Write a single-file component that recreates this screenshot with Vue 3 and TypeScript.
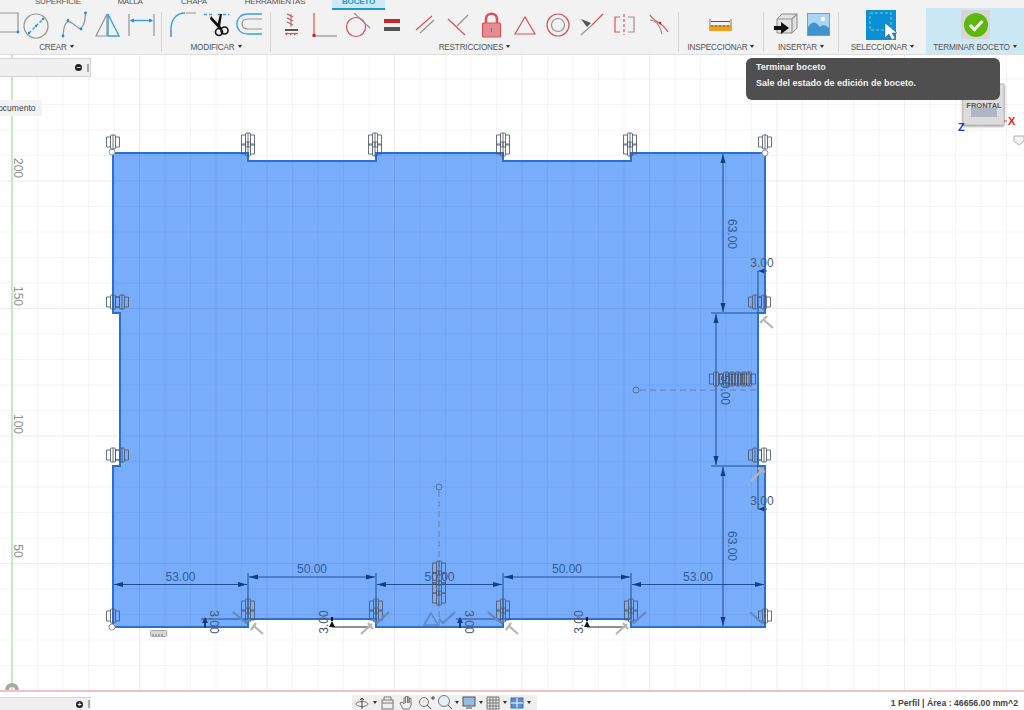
<script setup lang="ts">
// rejilla del lienzo: paso 25.5 px, linea mayor cada 5
const STEP = 25.5
const vLines = Array.from({ length: 40 }, (_, i) => ({ p: 12 + i * STEP, major: i % 5 === 0 }))
const hLines = Array.from({ length: 26 }, (_, i) => ({ p: 691 - i * STEP, major: i % 5 === 0 }))

const axisLabels = [
  { t: '200', y: 168 },
  { t: '150', y: 296 },
  { t: '100', y: 424 },
  { t: '50', y: 551 },
]

const outline =
  'M113 153 H248 V161 H376 V153 H503 V161 H631 V153 H765 V313 H758 V466 H765 V627 H631 V619 H503 V627 H376 V619 H248 V627 H113 V466 H120 V313 H113 Z'

// cotas horizontales y verticales
const hDims = [
  { x1: 113, x2: 248, y: 584.5, t: '53.00' },
  { x1: 248, x2: 376, y: 577, t: '50.00' },
  { x1: 376, x2: 503, y: 584.5, t: '50.00' },
  { x1: 503, x2: 631, y: 577, t: '50.00' },
  { x1: 631, x2: 765, y: 584.5, t: '53.00' },
]
const vDims = [
  { x: 723, y1: 153, y2: 313, t: '63.00', ty: 234 },
  { x: 716, y1: 313, y2: 466, t: '50.00', ty: 390 },
  { x: 723, y1: 466, y2: 627, t: '63.00', ty: 546 },
]

// restricciones sobre el contorno
const glyphs = [
  [113, 142], [248, 140], [248, 149], [375, 140], [375, 149], [503, 140], [503, 149],
  [630, 140], [630, 149], [765, 142],
  [113, 616], [765, 616],
  [248, 606], [248, 615], [376, 606], [376, 615], [503, 606], [503, 615], [631, 606], [631, 615],
  [439, 568], [439, 578], [439, 588], [439, 598],
  [113, 302], [122, 302], [113, 455], [122, 455],
  [755, 302], [764, 302], [755, 455], [764, 455],
  [716, 379], [726, 379], [732, 379], [738, 379], [744, 379], [749, 379],
]
</script>

<template>
  <div class="app">
    <header class="toolbar">
      <nav class="tabs">
        <span class="tab t-sup">SUPERFICIE</span>
        <span class="tab t-mal">MALLA</span>
        <span class="tab t-cha">CHAPA</span>
        <span class="tab t-her">HERRAMIENTAS</span>
        <span class="tab t-boc">BOCETO</span>
      </nav>
      <div class="ribbon">
        <section class="group g-crear">
          <div class="icons">
            <svg width="34" height="30" viewBox="-14 10 34 30">
              <path d="M-8 13H18V32H-8" class="g-line" />
              <circle cx="18" cy="32" r="1.4" class="blue-dot" />
            </svg>
            <svg width="34" height="30" viewBox="20 10 34 30">
              <circle cx="36" cy="26" r="12" class="g-line" />
              <path d="M29 33L43 19" class="b-line dash" />
              <circle cx="29" cy="33" r="1.2" class="blue-dot" />
              <circle cx="36" cy="26" r="1.2" class="blue-dot" />
              <circle cx="43" cy="19" r="1.2" class="blue-dot" />
            </svg>
            <svg width="34" height="30" viewBox="54 10 34 30">
              <path d="M63 36C64 22 67 20 72 23S79 31 82 27S85 20 85.500 13" class="g-line" />
              <circle cx="63" cy="36" r="1.4" class="blue-dot" />
              <circle cx="68" cy="20.500" r="1.400" class="blue-dot" />
              <circle cx="81" cy="29" r="1.400" class="blue-dot" />
              <circle cx="85.500" cy="13" r="1.400" class="blue-dot" />
            </svg>
            <svg width="34" height="30" viewBox="88 10 34 30">
              <path d="M96 36L107 14V36Z" class="g-line" />
              <path d="M108 14L119 36H108Z" class="b-line" />
            </svg>
            <svg width="34" height="30" viewBox="122 10 34 30">
              <path d="M129 14V36M154 14V36" class="g-line" />
              <path d="M131 20.500H152" class="b-line" />
              <path d="M130 20.500L134 18.500V22.500ZM153 20.500L149 18.500V22.500Z" class="blue-fill" />
            </svg>
          </div>
          <span class="label">CREAR</span>
        </section>
        <i class="sep"></i>
        <section class="group g-mod">
          <div class="icons">
            <svg width="34" height="30" viewBox="166 10 34 30">
              <path d="M171 37V29C171 20 176 13 185 13" class="b-line" />
              <path d="M171 37V30M186 13H196" class="g-line" />
            </svg>
            <svg width="34" height="30" viewBox="200 10 34 30">
              <path d="M204 14.500H214M218 14.500H229" class="b-line dash" />
              <path d="M211 16L222 28L220 30L210 19ZM220 14L222 14L220 27L217 26Z" class="black-fill" />
              <circle cx="219" cy="32" r="3.500" class="scis" />
              <circle cx="224.500" cy="30.500" r="3.500" class="scis" />
            </svg>
            <svg width="34" height="30" viewBox="234 10 34 30">
              <path d="M262 14H248C233 14 233 34 248 34H262" class="b-line" />
              <path d="M262 19H248C240 19 240 29 248 29H262" class="g-line" />
            </svg>
          </div>
          <span class="label">MODIFICAR</span>
        </section>
        <i class="sep"></i>
        <section class="group g-res">
          <div class="icons">
            <svg width="33" height="30" viewBox="275 10 33 30">
              <path d="M291 14V27" class="g-line" />
              <path d="M287 14L293 17M287 18L293 21M287 22L293 25" class="r-line" />
              <path d="M285 30H298" class="dk-line thick" />
              <path d="M286 35L288 33M290 35L292 33M294 35L296 33M285 33.500H298" class="r-line" />
            </svg>
            <svg width="33" height="30" viewBox="308 10 33 30">
              <path d="M314 13V35" class="r-line" />
              <path d="M315 36H337" class="g-line" />
              <rect x="312.500" y="34" width="3" height="3" class="red-fill" />
            </svg>
            <svg width="33" height="30" viewBox="341 10 33 30">
              <circle cx="356" cy="27" r="9.500" class="r-line" />
              <path d="M354 13L370 28" class="g-line" />
            </svg>
            <svg width="34" height="30" viewBox="374 10 34 30">
              <rect x="384" y="19" width="16" height="4" class="red-fill" />
              <rect x="384" y="27" width="16" height="4" class="dk-fill" />
            </svg>
            <svg width="33" height="30" viewBox="408 10 33 30">
              <path d="M416 30L432 16" class="r-line" />
              <path d="M420 33L434 20" class="g-line" />
            </svg>
            <svg width="33" height="30" viewBox="441 10 33 30">
              <path d="M448 19L465 35" class="r-line" />
              <path d="M457 26L468 15" class="g-line" />
            </svg>
            <svg width="34" height="30" viewBox="474 10 34 30">
              <path d="M486 24V19C486 12 497 12 497 19V24" class="lock-arc" />
              <rect x="482.500" y="23" width="18" height="14" rx="1" class="lock-body" />
              <path d="M491.500 28V32" class="r-line" />
            </svg>
            <svg width="33" height="30" viewBox="508 10 33 30">
              <path d="M515 34L525 17L535 34Z" class="r-line" />
            </svg>
            <svg width="33" height="30" viewBox="541 10 33 30">
              <circle cx="558" cy="25" r="11" class="r-line" />
              <circle cx="558" cy="25" r="6.500" class="g-line" />
            </svg>
            <svg width="33" height="30" viewBox="574 10 33 30">
              <path d="M581 35L592 25" class="g-half" />
              <path d="M592 25L603 14" class="r-line" />
              <path d="M581 19L591 23L587 27Z" class="dk-fill" />
            </svg>
            <svg width="34" height="30" viewBox="607 10 34 30">
              <path d="M624 14V35" class="r-line dash" />
              <path d="M620 17H615V32H620" class="r-line" />
              <path d="M628 17H634V32H628" class="g-line" />
            </svg>
            <svg width="33" height="30" viewBox="641 10 33 30">
              <path d="M650 15C654 22 662 22 668 32" class="r-line" />
              <path d="M650 20C656 20 660 26 662 34" class="g-line" />
              <circle cx="660" cy="23" r="1.300" class="red-fill" />
            </svg>
          </div>
          <span class="label">RESTRICCIONES</span>
        </section>
        <i class="sep"></i>
        <section class="group g-ins">
          <div class="icons">
            <svg width="84" height="30" viewBox="680 10 84 30">
              <path d="M711 19V25M732 19V25" class="g-line" />
              <path d="M712 21.500H731" class="dk-line" />
              <rect x="710" y="25" width="23" height="6" class="orange-fill" />
              <path d="M713 27V25M717 27V25M721 27V25M725 27V25M729 27V25" class="dk-line" />
            </svg>
          </div>
          <span class="label">INSPECCIONAR</span>
        </section>
        <i class="sep"></i>
        <section class="group g-inse">
          <div class="icons">
            <svg width="40" height="30" viewBox="764 10 40 30">
              <path d="M777 19L782 14H797V28L792 33H777Z" class="box-f" />
              <path d="M777 19H792V33M792 19L797 14" class="g-line" />
              <path d="M774 26H781V22L789 28L781 34V30H774Z" class="black-fill" />
            </svg>
            <svg width="34" height="30" viewBox="804 10 34 30">
              <rect x="807.500" y="13.500" width="22" height="22" class="img-bg" />
              <path d="M808 35V27C813 20 816 22 820 27C823 24 826 25 829 28V35Z" class="img-mt" />
              <circle cx="823" cy="19" r="2.200" class="img-sun" />
            </svg>
          </div>
          <span class="label">INSERTAR</span>
        </section>
        <i class="sep"></i>
        <section class="group g-sel">
          <div class="icons">
            <svg width="87" height="30" viewBox="839 10 87 30">
              <rect x="866" y="10" width="30" height="30" class="sel-bg" />
              <rect x="870" y="13" width="21" height="17" class="sel-dash" />
              <path d="M885 23V38L889 34L892 40L895 38L892 33H897Z" class="white-fill" />
            </svg>
          </div>
          <span class="label">SELECCIONAR</span>
        </section>
        <section class="group g-end">
          <div class="icons">
            <svg width="98" height="30" viewBox="926 10 98 30">
              <rect x="961" y="10" width="29" height="29" class="end-bg" />
              <circle cx="976" cy="25" r="12" class="end-ok" />
              <path d="M970 25L974.500 29.500L982.500 21" class="end-check" />
            </svg>
          </div>
          <span class="label">TERMINAR BOCETO</span>
        </section>
      </div>
    </header>

    <main class="canvas">
      <svg class="drawing" viewBox="0 55 1024 655">
        <defs>
          <g id="brk">
            <path d="M-2.500 -5H-6.500V5H-2.500M2.500 -5H6.500V5H2.500" />
            <rect x="-2.500" y="-7" width="5" height="14" rx="1" />
            <path d="M0 -7V7" />
          </g>
          <marker id="arr" markerWidth="9" markerHeight="6" refX="9" refY="3" orient="auto-start-reverse" markerUnits="userSpaceOnUse">
            <path d="M0 0.500L9 3L0 5.500Z" class="arrow-head" />
          </marker>
        </defs>

        <path :d="outline" class="shape" />

        <g v-for="l in vLines" :key="'v' + l.p">
          <line :x1="l.p" :x2="l.p" y1="55" y2="691" :class="l.major ? 'grid-major' : 'grid-minor'" />
        </g>
        <g v-for="l in hLines" :key="'h' + l.p">
          <line x1="0" x2="1024" :y1="l.p" :y2="l.p" :class="l.major ? 'grid-major' : 'grid-minor'" />
        </g>

        <path :d="outline" class="shape-line" />

        <line x1="12" x2="12" y1="55" y2="691" class="axis-green" />
        <line x1="0" x2="1024" y1="691" y2="691" class="axis-red" />
        <path d="M5 690A7 7 0 0 1 19 690H15A3 3 0 0 0 9 690Z" class="origin" />

        <text
          v-for="a in axisLabels"
          :key="a.t"
          class="axis-text"
          text-anchor="middle"
          :transform="`translate(14 ${a.y}) rotate(90)`"
        >{{ a.t }}</text>

        <!-- lineas de construccion -->
        <path d="M640 390H757M439 491V627" class="construct" />
        <circle cx="636" cy="390" r="3" class="pt" />
        <circle cx="439" cy="487" r="3" class="pt" />
        <circle cx="112" cy="152" r="3" class="pt-w" />
        <circle cx="112" cy="627" r="3" class="pt-w" />
        <circle cx="765" cy="153" r="3" class="pt-w" />

        <!-- cotas -->
        <g v-for="d in hDims" :key="d.x1">
          <line :x1="d.x1 + 1" :x2="d.x2 - 1" :y1="d.y" :y2="d.y" class="dim" marker-start="url(#arr)" marker-end="url(#arr)" />
          <text :x="(d.x1 + d.x2) / 2" :y="d.y - 4" class="dim-text" text-anchor="middle">{{ d.t }}</text>
        </g>
        <path d="M248 573V619M376 573V619M503 573V619M631 573V619" class="dim" />
        <g v-for="d in vDims" :key="d.x + d.ty">
          <line :x1="d.x" :x2="d.x" :y1="d.y1 + 1" :y2="d.y2 - 1" class="dim" marker-start="url(#arr)" marker-end="url(#arr)" />
          <text class="dim-text" text-anchor="middle" :transform="`translate(${d.x + 5} ${d.ty}) rotate(90)`">{{ d.t }}</text>
        </g>
        <path d="M711 313H758M711 466H758" class="dim" />

        <!-- cotas de 3 mm -->
        <path d="M758 271V313M758 466V509M201 619H248M456 619H503M758 271H767M758 509H767" class="dim" />
        <path d="M332 627H370M587 627H625" class="dim-k" />
        <path d="M759 271L764 268.500V273.500ZM759 509L764 506.500V511.500Z" class="navy-fill" />
        <path d="M205 617L202 623H208ZM460 617L457 623H463Z" class="navy-fill" />
        <path d="M204 623H206V628H204ZM459 623H461V628H459Z" class="navy-fill" />
        <path d="M331 617H333V621H331ZM586 617H588V621H586ZM332 621L329 627H335ZM587 621L584 627H590Z" class="black-fill" />
        <text x="762" y="267" class="three" text-anchor="middle">3.00</text>
        <text x="762" y="505" class="three" text-anchor="middle">3.00</text>
        <text class="three" text-anchor="middle" transform="translate(210 622) rotate(90)">3.00</text>
        <text class="three" text-anchor="middle" transform="translate(465 622) rotate(90)">3.00</text>
        <text class="three" text-anchor="middle" transform="translate(328 622) rotate(-90)">3.00</text>
        <text class="three" text-anchor="middle" transform="translate(583 622) rotate(-90)">3.00</text>

        <!-- restricciones -->
        <use v-for="(g, i) in glyphs" :key="i" href="#brk" :x="g[0]" :y="g[1]" class="glyph" />
        <path
          d="M233 612L246 623L250 619M488 612L501 623L505 619M750 612L762 623L765 619M389 612L377 623L373 619M455 612L443 623L439 619M646 612L634 623L630 619"
          class="mark-blue"
        />
        <path d="M424 625L431 613L438 625Z" class="tri-blue" />
        <path
          d="M251 630L256 623M254 626L263 634M506 630L511 623M509 626L518 634M361 634L372 624M368 623L373 629M616 634L627 624M623 623L628 629M760 323L767 316M764 320L773 328M751 481L763 469M758 468L765 472"
          class="mark-grey"
        />
        <rect x="150.500" y="630.500" width="16" height="6" rx="1" class="rule" />
        <path d="M153 634V636M156 634V636M159 634V636M162 634V636" class="mark-rule" />

        <!-- cubo de vista -->
        <rect x="963" y="84" width="41" height="41" rx="1" class="cube" />
        <rect x="971" y="108" width="26" height="9" class="cube-in" />
        <text x="984" y="108" class="cube-text" text-anchor="middle">FRONTAL</text>
        <path d="M1004 121H1007" class="x-line" />
        <text x="1008" y="125" class="x-text">X</text>
        <text x="958" y="131" class="z-text">Z</text>
        <path d="M1014 136H1024V141L1019 145L1014 141Z" class="home" />
      </svg>

      <div class="browser">
        <span class="round">−</span>
        <i class="grip"></i>
      </div>
      <div class="chip">Documento</div>

      <div class="tip">
        <strong>Terminar boceto</strong>
        <p>Sale del estado de edición de boceto.</p>
      </div>

      <footer class="bottom">
        <div class="browser comments">
          <span class="round">+</span>
          <i class="grip"></i>
        </div>
        <div class="navbar">
          <svg width="18" height="15" viewBox="0 0 18 15">
            <ellipse cx="9" cy="9" rx="6" ry="2.500" class="nav-line" />
            <path d="M9 3V14M7 5L9 3L11 5" class="nav-dark" />
          </svg>
          <i class="caret"></i>
          <svg width="18" height="15" viewBox="0 0 18 15">
            <rect x="3" y="5" width="11" height="9" class="nav-line" />
            <path d="M5 5V2H12V5M3 8H14" class="nav-line" />
          </svg>
          <svg width="20" height="15" viewBox="0 0 20 15">
            <path d="M6 14L3 8L5 7L7 9V3H8.500V8V1.500H10.500V8V2H12V8V3.500H14V11L12 14Z" class="nav-line" />
          </svg>
          <svg width="20" height="15" viewBox="0 0 20 15">
            <circle cx="7" cy="7" r="4.500" class="nav-line" />
            <path d="M10 10L14 14M14 3H18M16 1V5" class="nav-dark" />
          </svg>
          <svg width="16" height="15" viewBox="0 0 16 15">
            <circle cx="7" cy="6" r="5.500" class="nav-glass" />
            <path d="M11 10L15 14" class="nav-dark thick" />
          </svg>
          <i class="caret"></i>
          <svg width="16" height="15" viewBox="0 0 16 15">
            <rect x="2" y="2" width="12" height="9" class="nav-screen" />
            <path d="M5 13H11" class="nav-dark" />
          </svg>
          <i class="caret"></i>
          <svg width="16" height="15" viewBox="0 0 16 15">
            <path d="M2 2H14V14H2ZM2 5H14M2 8H14M2 11H14M5 2V14M8 2V14M11 2V14" class="nav-line" />
          </svg>
          <i class="caret"></i>
          <svg width="16" height="15" viewBox="0 0 16 15">
            <rect x="2" y="3" width="12" height="10" class="nav-views" />
            <path d="M8 3V13M2 8H14" class="nav-sep" />
          </svg>
          <i class="caret"></i>
        </div>
        <div class="status">1 Perfil | Área : 46656.00 mm^2</div>
      </footer>
    </main>
  </div>
</template>

<style scoped>
.app {
  width: 1024px;
  height: 710px;
  display: flex;
  flex-direction: column;
  overflow: hidden;
  background: #fff;
  font-family: "Liberation Sans", Arial, sans-serif;
}

/* barra superior */
.toolbar {
  height: 55px;
  flex: none;
  background: #f2f2f2;
  border-bottom: 1px solid #dedede;
  box-sizing: border-box;
  color: #555;
}
.tabs {
  height: 10px;
  display: flex;
  overflow: hidden;
  font-size: 8px;
  letter-spacing: -0.2px;
}
.tab { display: block; text-align: center; height: 10px; overflow: hidden; line-height: 3px; }
.t-sup { width: 102px; margin-left: 7px; }
.t-mal { width: 50px; margin-left: -4px; }
.t-cha { width: 78px; }
.t-her { width: 84px; }
.t-boc {
  width: 53px;
  margin-left: 15px;
  background: #cfe9f7;
  border-bottom: 2px solid #1a9bd7;
  box-sizing: border-box;
  color: #1a9bd7;
  font-weight: bold;
}
.ribbon { display: flex; height: 44px; }
.group {
  display: flex;
  flex-direction: column;
  align-items: center;
  overflow: hidden;
  flex: none;
}
.icons { display: flex; height: 30px; flex: none; }
.icons svg { display: block; flex: none; }
.label {
  height: 14px;
  line-height: 16px;
  font-size: 8.2px;
  white-space: nowrap;
  letter-spacing: -0.2px;
}
.label::after {
  content: "";
  display: inline-block;
  margin-left: 3px;
  border-left: 2.5px solid transparent;
  border-right: 2.5px solid transparent;
  border-top: 3px solid #333;
  vertical-align: 2px;
}
.sep {
  display: block;
  width: 1px;
  height: 40px;
  margin-top: 2px;
  background: #d6d6d6;
  flex: none;
}
.g-crear { width: 161px; }
.g-crear .icons { align-self: flex-start; margin-left: -14px; }
.g-crear .label { margin-right: 48px; }
.g-mod { width: 108px; }
.g-mod .icons { align-self: flex-start; margin-left: 4px; }
.g-res { width: 407px; }
.g-res .icons { align-self: flex-start; margin-left: 4px; }
.g-ins { width: 84px; }
.g-inse { width: 74px; }
.g-sel { width: 87px; }
.g-end {
  width: 98px;
  margin-top: -2px;
  height: 46px;
  padding-top: 2px;
  box-sizing: border-box;
  background: #cde8f5;
}

/* trazos de los iconos */
svg path, svg circle, svg rect, svg ellipse { fill: none; }
.g-line { stroke: #939393; stroke-width: 1.2; fill: none; }
.g-half { stroke: #939393; stroke-width: 1.1; }
.b-line { stroke: #39a0e8; stroke-width: 1.4; fill: none; }
.r-line { stroke: #d9525a; stroke-width: 1.2; fill: none; }
.dk-line { stroke: #555; stroke-width: 1; }
.thick { stroke-width: 2; }
.dash { stroke-dasharray: 3 2; }
.blue-dot, .blue-fill { fill: #1d8ce0; }
.black-fill { fill: #111; }
.red-fill { fill: #c9252d; }
.dk-fill { fill: #555; }
.orange-fill { fill: #f0a020; }
.white-fill { fill: #fff; stroke: #444; stroke-width: 0.4; }
.scis { stroke: #111; stroke-width: 1.6; }
.lock-arc { stroke: #d9525a; stroke-width: 2.6; }
.lock-body { fill: #e28d91; stroke: #d9525a; stroke-width: 1.2; }
.box-f { fill: #e2e2e2; stroke: #8a8a8a; }
.img-bg { fill: #a9d4f2; stroke: #5aa6dc; }
.img-mt { fill: #3f93cf; }
.img-sun { fill: #fff; }
.sel-bg { fill: #0a8fd4; }
.sel-dash { stroke: #7fd0b0; stroke-dasharray: 3 2; stroke-width: 1; }
.end-bg { fill: #d6d6d6; }
.end-ok { fill: #5cb80f; }
.end-check { stroke: #fff; stroke-width: 3; }

/* lienzo */
.canvas { flex: 1; position: relative; overflow: hidden; }
.drawing { position: absolute; inset: 0; width: 1024px; height: 655px; display: block; }
.shape { fill: #78adfc; }
.shape-line { fill: none; stroke: #2a6fd1; stroke-width: 2; }
.grid-minor { stroke: #000; stroke-opacity: 0.04; stroke-width: 1; }
.grid-major { stroke: #000; stroke-opacity: 0.07; stroke-width: 1; }
.axis-green { stroke: #b4e6ae; stroke-width: 1.4; }
.axis-red { stroke: #efb0b0; stroke-width: 1.4; }
.origin { fill: #a8a8a8; }
.axis-text { font-size: 12px; fill: #8f8f8f; }
.construct { stroke: #6d7fa6; stroke-width: 1; stroke-dasharray: 6 4; fill: none; }
.pt { fill: none; stroke: #4e6f9f; stroke-width: 1; }
.pt-w { fill: #fff; stroke: #999; stroke-width: 1; }
.dim { stroke: #1c4f94; stroke-width: 1; fill: none; }
.dim-k { stroke: #222; stroke-width: 1; fill: none; }
.arrow-head { fill: #123f80; }
.navy-fill { fill: #123f80; }
.dim-text { font-size: 12px; fill: #2c5c9c; }
.three { font-size: 12px; fill: #4a5a70; }
.glyph { fill: none; stroke: #4d586a; stroke-width: 1; stroke-opacity: 0.85; }
.mark-blue { fill: none; stroke: #5f88c0; stroke-width: 2; }
.tri-blue { fill: none; stroke: #5f88c0; stroke-width: 1.5; }
.mark-grey { fill: none; stroke: #b5b5b5; stroke-width: 2.2; }
.rule { fill: #d8d8d8; stroke: #a8a8a8; stroke-width: 1; }
.mark-rule { stroke: #777; stroke-width: 1; }
.cube { fill: #dcdcdc; stroke: #bdbdbd; filter: drop-shadow(0 1px 1px #999); }
.cube-in { fill: #aeb6c2; }
.cube-text { font-size: 7.5px; font-weight: bold; fill: #555; }
.x-line { stroke: #e53935; }
.x-text { font-size: 11px; font-weight: bold; fill: #ee2222; }
.z-text { font-size: 11px; font-weight: bold; fill: #2233dd; }
.home { stroke: #b0b0b0; stroke-width: 1; fill: #f4f4f4; }

/* paneles flotantes */
.browser {
  position: absolute;
  left: 0;
  top: 3px;
  width: 91px;
  height: 19px;
  display: flex;
  align-items: center;
  justify-content: flex-end;
  gap: 4px;
  padding-right: 1px;
  box-sizing: border-box;
  background: #f0f0f0;
  border: 1px solid #d4d4d4;
  border-left: none;
}
.round {
  width: 7px;
  height: 7px;
  border-radius: 50%;
  background: #222;
  color: #fff;
  font-size: 7px;
  font-weight: bold;
  line-height: 7px;
  text-align: center;
}
.grip { display: block; width: 2px; height: 8px; background: #aaa; margin-left: 1px; }
.chip {
  position: absolute;
  left: -8px;
  top: 45px;
  width: 50px;
  height: 16px;
  line-height: 16px;
  background: #f2f2f2;
  color: #444;
  font-size: 8.5px;
  text-align: right;
  padding-right: 7px;
  box-sizing: border-box;
}
.tip {
  position: absolute;
  left: 746px;
  top: 3px;
  width: 254px;
  height: 42px;
  box-sizing: border-box;
  padding: 4px 10px;
  background: #4f4f4f;
  border-radius: 6px;
  color: #f2f2f2;
  font-size: 9px;
  font-weight: bold;
  line-height: 10px;
}
.tip strong { display: block; }
.tip p { margin: 6px 0 0; }

/* pie */
.bottom {
  position: absolute;
  left: 0;
  right: 0;
  bottom: 0;
  height: 15px;
  display: flex;
  align-items: flex-end;
}
.comments { position: static; flex: none; height: 13px; border: none; border-top: 1px solid #d4d4d4; }
.navbar {
  width: 185px;
  height: 15px;
  margin-left: 261px;
  display: flex;
  align-items: center;
  background: #efefef;
  padding-left: 1px;
  box-sizing: border-box;
  flex: none;
}
.navbar svg { display: block; flex: none; }
.caret {
  display: block;
  flex: none;
  margin: 0 2px;
  border-left: 2.5px solid transparent;
  border-right: 2.5px solid transparent;
  border-top: 3px solid #333;
}
.nav-line { stroke: #777; stroke-width: 1; fill: none; }
.nav-dark { stroke: #444; stroke-width: 1; fill: none; }
.nav-glass { stroke: #777; stroke-width: 1; fill: #e4f0f7; }
.nav-screen { stroke: #555; stroke-width: 1; fill: #94bce0; }
.nav-views { fill: #5b8fd0; stroke: #3e6ea8; }
.nav-sep { stroke: #fff; }
.status {
  margin-left: auto;
  padding-right: 6px;
  height: 15px;
  line-height: 17px;
  font-size: 8.7px;
  font-weight: bold;
  color: #444;
  white-space: nowrap;
}
</style>

<style>
html, body { margin: 0; padding: 0; background: #fff; }
</style>
